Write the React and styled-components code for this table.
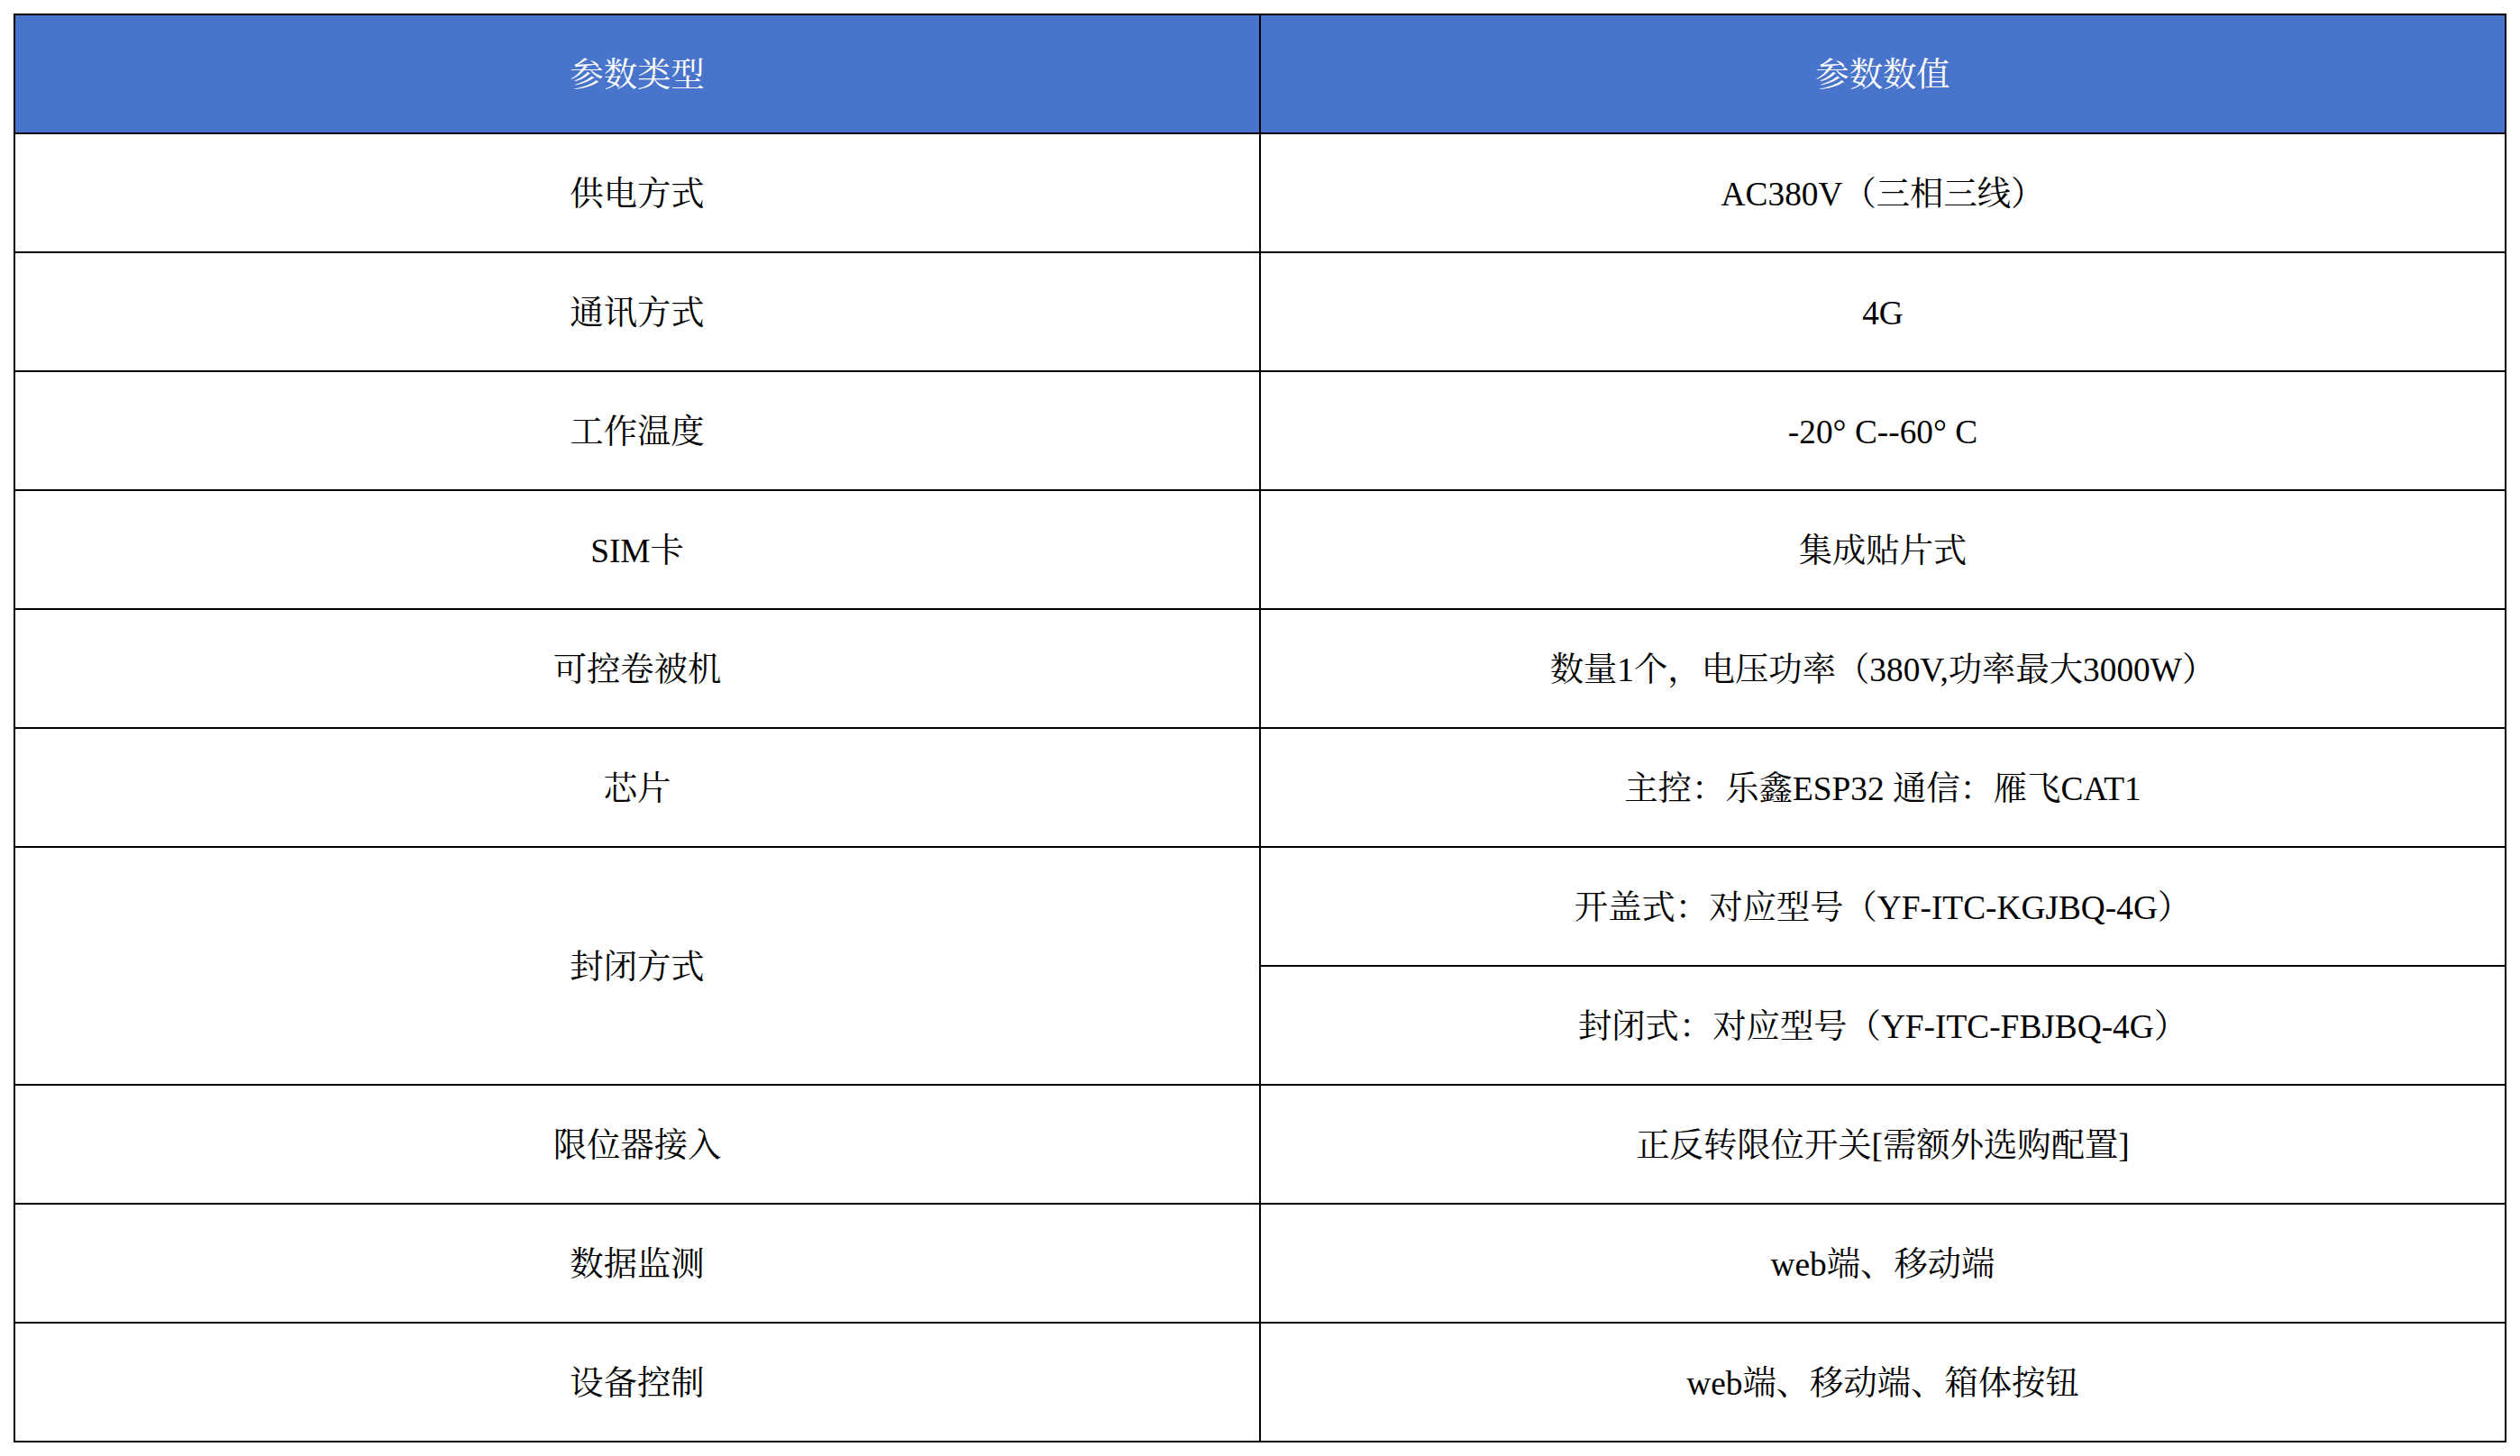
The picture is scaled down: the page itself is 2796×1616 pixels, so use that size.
import React from "react";
import styled, { createGlobalStyle } from "styled-components";

const GlobalStyle = createGlobalStyle`
  html, body {
    margin: 0;
    padding: 0;
    background: #ffffff;
  }
  body {
    padding: 15px;
    font-family: "Liberation Serif", "Noto Serif CJK SC", "Noto Sans CJK SC", serif;
  }
`;

const Table = styled.table`
  width: 2766px;
  border-collapse: collapse;
  table-layout: fixed;
  font-size: 37.33px;
  line-height: 1.2;
`;

const HeadCell = styled.th`
  width: 50%;
  height: 125px;
  padding: 5px 0 0;
  border: 2px solid #000;
  background: #4874cb;
  color: #ffffff;
  font-weight: 400;
  text-align: center;
  vertical-align: middle;
`;

const Cell = styled.td`
  height: 125px;
  padding: 5px 0 0;
  border: 2px solid #000;
  color: #000;
  font-weight: 400;
  text-align: center;
  vertical-align: middle;
  white-space: pre;
`;

const rows = [
  { label: "供电方式", values: ["AC380V（三相三线）"] },
  { label: "通讯方式", values: ["4G"] },
  { label: "工作温度", values: ["-20° C--60° C"] },
  { label: "SIM卡", values: ["集成贴片式"] },
  { label: "可控卷被机", values: ["数量1个，电压功率（380V,功率最大3000W）"] },
  { label: "芯片", values: ["主控：乐鑫ESP32 通信：雁飞CAT1"] },
  {
    label: "封闭方式",
    values: [
      "开盖式：对应型号（YF-ITC-KGJBQ-4G）",
      "封闭式：对应型号（YF-ITC-FBJBQ-4G）",
    ],
  },
  { label: "限位器接入", values: ["正反转限位开关[需额外选购配置]"] },
  { label: "数据监测", values: ["web端、移动端"] },
  { label: "设备控制", values: ["web端、移动端、箱体按钮"] },
];

export default function App() {
  return (
    <>
      <GlobalStyle />
      <Table>
        <thead>
          <tr>
            <HeadCell>参数类型</HeadCell>
            <HeadCell>参数数值</HeadCell>
          </tr>
        </thead>
        <tbody>
          {rows.map((row) =>
            row.values.map((value, i) => (
              <tr key={row.label + i}>
                {i === 0 && (
                  <Cell rowSpan={row.values.length}>{row.label}</Cell>
                )}
                <Cell>{value}</Cell>
              </tr>
            ))
          )}
        </tbody>
      </Table>
    </>
  );
}
